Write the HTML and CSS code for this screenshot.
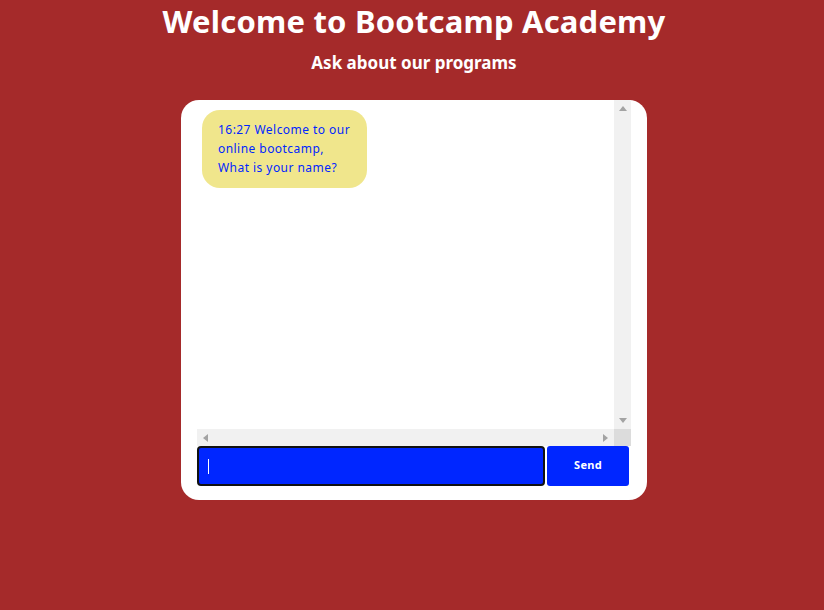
FILE: index.html
```html
<!DOCTYPE html>
<html>
<head>
<meta charset="utf-8">
<link rel="stylesheet" href="styles.css">
</head>
<body>
<h1 class="title">Welcome to Bootcamp Academy</h1>
<h2 class="subtitle">Ask about our programs</h2>
<div class="chat">
  <div class="messages">
    <div class="content">
      <div class="bubble">16:27 Welcome to our online bootcamp, What is your name?</div>
    </div>
    <div class="vbar">
      <span class="arrow"><svg width="8" height="5" viewBox="0 0 8 5"><polygon points="0,5 8,5 4,0" fill="#a3a3a3"/></svg></span>
      <span class="arrow"><svg width="8" height="5" viewBox="0 0 8 5"><polygon points="0,0 8,0 4,5" fill="#a3a3a3"/></svg></span>
    </div>
    <div class="hbar">
      <span class="arrow"><svg width="5" height="8" viewBox="0 0 5 8"><polygon points="5,0 5,8 0,4" fill="#a3a3a3"/></svg></span>
      <span class="arrow"><svg width="5" height="8" viewBox="0 0 5 8"><polygon points="0,0 0,8 5,4" fill="#a3a3a3"/></svg></span>
    </div>
    <div class="corner"></div>
  </div>
  <form class="composer">
    <div class="field"><span class="caret"></span></div>
    <button class="send" type="button">Send</button>
  </form>
</div>
</body>
</html>
```
FILE: styles.css
```css
html, body {
  margin: 0;
  padding: 0;
}
body {
  background: #a52a2a;
  font-family: "Noto Sans", "DejaVu Sans", sans-serif;
  color: #fff;
  height: 610px;
  padding-left: 4px;
  box-sizing: border-box;
}
.title {
  margin: 0;
  padding-top: 3px;
  text-align: center;
  font-size: 31px;
  font-weight: 700;
  line-height: 36px;
  letter-spacing: 0.2px;
}
.subtitle {
  margin: 0;
  padding-top: 12px;
  text-align: center;
  font-size: 17px;
  font-weight: 700;
  line-height: 24px;
}
.chat {
  width: 434px;
  margin: 25px auto 0;
  background: #fff;
  border-radius: 18px;
  padding: 0 16px 14px;
}
.messages {
  height: 346px;
  display: grid;
  grid-template-columns: 1fr 17px;
  grid-template-rows: 1fr 17px;
}
.content {
  padding: 10px 0 0 5px;
}
.vbar {
  background: #f1f1f1;
  display: flex;
  flex-direction: column;
  justify-content: space-between;
}
.hbar {
  background: #f1f1f1;
  display: flex;
  justify-content: space-between;
}
.corner {
  background: #dcdcdc;
}
.arrow {
  width: 17px;
  height: 17px;
  display: flex;
  align-items: center;
  justify-content: center;
}
.arrow svg {
  display: block;
}
.bubble {
  width: 165px;
  box-sizing: border-box;
  background: #f0e68c;
  color: #0026ff;
  border-radius: 18px;
  padding: 10px 10px 11px 16px;
  font-size: 12px;
  line-height: 19px;
  letter-spacing: 0.45px;
}
.composer {
  display: flex;
  gap: 2px;
  margin: 0;
}
.field {
  flex: 0 0 348px;
  box-sizing: border-box;
  height: 40px;
  background: #0026ff;
  border: 2px solid #111;
  border-radius: 4px;
  padding: 0 9px;
  display: flex;
  align-items: center;
}
.caret {
  width: 1px;
  height: 15px;
  background: #fff;
}
.send {
  flex: 0 0 82px;
  height: 40px;
  background: #0026ff;
  border: none;
  border-radius: 3px;
  color: #fff;
  font-family: "Noto Sans", "DejaVu Sans", sans-serif;
  font-weight: 700;
  font-size: 11px;
  letter-spacing: 0.3px;
  padding: 0 0 3px;
}
```
